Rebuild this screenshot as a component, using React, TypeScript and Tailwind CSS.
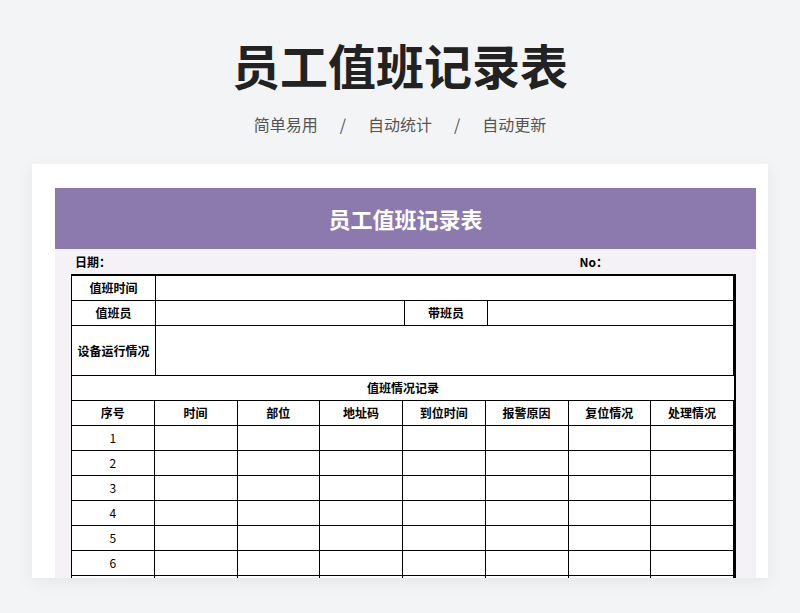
const cols = ['序号', '时间', '部位', '地址码', '到位时间', '报警原因', '复位情况', '处理情况'];
const font = { fontFamily: '"Noto Sans CJK SC", "Noto Sans", sans-serif' };

export default function App() {
  const cell = 'border-r border-b border-black';
  return (
    <div className="w-[800px] h-[613px] bg-[#f3f4f6] overflow-hidden" style={font}>
      <div className="pt-[32px] text-center">
        <h1 className="text-[48px] leading-[64px] font-bold text-[#222]">员工值班记录表</h1>
        <div className="mt-[16px] flex justify-center gap-[22px] text-[16px] text-[#555]">
          <span>简单易用</span><span>/</span><span>自动统计</span><span>/</span><span>自动更新</span>
        </div>
      </div>
      <div className="mx-[32px] mt-[28px] h-[414px] bg-white overflow-hidden pt-[24px] px-[23px] shadow-[0_4px_16px_rgba(0,0,0,0.06)]">
        <div className="h-full bg-[#f4f2f7] mr-[-11px]">
          <div className="h-[61px] bg-[#8c79ad] flex items-center justify-center text-white text-[22px] font-bold">员工值班记录表</div>
          <div className="px-[16px]">
            <div className="h-[25px] flex items-center justify-between text-[12px] font-bold text-black px-[4px]">
              <span>日期：</span><span className="mr-[128px]">No：</span>
            </div>
            <div className="w-[665px] bg-white border-l border-t-2 border-r-2 border-black text-[12px] font-bold text-black">
              <div className="flex h-[25px]">
                <div className={`${cell} w-[84px] flex items-center justify-center`}>值班时间</div>
                <div className={`${cell} flex-1`} />
              </div>
              <div className="flex h-[25px]">
                <div className={`${cell} w-[84px] flex items-center justify-center`}>值班员</div>
                <div className={`${cell} w-[249px]`} />
                <div className={`${cell} w-[83px] flex items-center justify-center`}>带班员</div>
                <div className={`${cell} flex-1`} />
              </div>
              <div className="flex h-[50px]">
                <div className={`${cell} w-[84px] flex items-center justify-center`}>设备运行情况</div>
                <div className={`${cell} flex-1`} />
              </div>
              <div className="h-[25px] border-b border-black flex items-center justify-center">值班情况记录</div>
              <div className="grid grid-cols-8">
                {cols.map(c => (
                  <div key={c} className={`${cell} h-[25px] flex items-center justify-center`}>{c}</div>
                ))}
              </div>
              {[1, 2, 3, 4, 5, 6, 7].map(n => (
                <div key={n} className="grid grid-cols-8 font-normal">
                  {cols.map((c, i) => (
                    <div key={c} className={`${cell} h-[25px] flex items-center justify-center`}>{i === 0 ? n : ''}</div>
                  ))}
                </div>
              ))}
            </div>
          </div>
        </div>
      </div>
    </div>
  );
}
